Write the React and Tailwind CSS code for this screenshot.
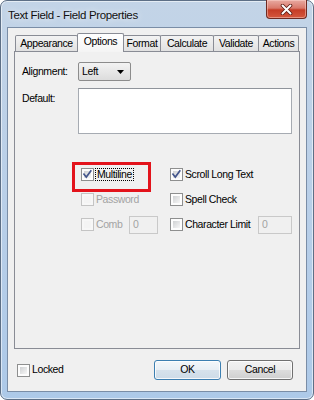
import React from "react";

function Check({ checked = false, disabled = false }) {
  return (
    <span
      className={`relative flex h-[13px] w-[13px] shrink-0 items-center justify-center border ${
        disabled ? "border-[#c4c4c4] bg-[#f7f7f7]" : "border-[#8e8f8f] bg-[#fdfdfd]"
      }`}
    >
      <span
        className={`absolute inset-[2px] ${
          disabled
            ? "bg-[#f4f4f4]"
            : "bg-gradient-to-br from-[#cfd1d3] to-[#f7f7f7]"
        }`}
      />
      {checked && (
        <svg className="relative" width="11" height="11" viewBox="0 0 11 11">
          <path d="M2 5.2 L4.3 8 L8.8 2" fill="none" stroke="#44568c" strokeWidth="1.7" strokeLinecap="square" />
        </svg>
      )}
    </span>
  );
}

function Tab({ label, w, selected }) {
  return (
    <div
      className={`-ml-px flex shrink-0 items-center justify-center rounded-t-[2px] border border-b-0 border-[#898c95] first:ml-0 ${
        selected
          ? "relative z-10 mb-[-1px] h-[19px] bg-gradient-to-b from-[#ffffff] to-[#f4f4f4] pb-[2px]"
          : "h-[16px] bg-gradient-to-b from-[#f3f3f3] to-[#e1e1e1]"
      }`}
      style={{ width: w }}
    >
      {label}
    </div>
  );
}

export default function App() {
  return (
    <div className="h-[400px] w-[314px] bg-white font-['Liberation_Sans',Arial,sans-serif] text-[10.5px] tracking-[-0.4px] text-black">
      <div className="flex h-[400px] w-[314px] flex-col rounded-[7px] border border-[#5d6f86] bg-gradient-to-b from-[#c3d4e7] via-[#b9cfe8] to-[#adc9e8] px-[6px] pb-[7px] shadow-[inset_0_0_0_1px_rgba(255,255,255,0.55)]">
        {/* Title bar */}
        <div className="flex h-[26px] shrink-0 items-start justify-between">
          <div className="pl-[1px] pt-[6px] text-[11.5px] tracking-[-0.35px] text-[#111] [text-shadow:0_0_7px_rgba(255,255,255,0.95)]">
            Text Field - Field Properties
          </div>
          <div className="-mt-px flex h-[19px] w-[41px] items-center justify-center rounded-b-[4px] border border-t-0 border-[#6e2a22] bg-[linear-gradient(#e8aaa1_0%,#d9796b_45%,#c53c26_55%,#d5583e_100%)] shadow-[inset_0_0_0_1px_rgba(255,220,210,0.45)]">
            <svg width="13" height="11" viewBox="0 0 13 11">
              <path d="M2.5 1.5 L10.5 9.5 M10.5 1.5 L2.5 9.5" stroke="#5a1a12" strokeWidth="3.6" strokeLinecap="round" />
              <path d="M2.5 1.5 L10.5 9.5 M10.5 1.5 L2.5 9.5" stroke="#ffffff" strokeWidth="2" strokeLinecap="round" />
            </svg>
          </div>
        </div>

        {/* Client */}
        <div className="flex flex-1 flex-col border border-[#7a8da6] bg-[#f0f0f0] pt-[5px]">
          <div className="mx-[6px] flex flex-col">
            {/* Tabs */}
            <div className="relative z-10 flex h-[18px] items-end pl-[1px]">
              <Tab label="Appearance" w={63} />
              <Tab label="Options" w={47} selected />
              <Tab label="Format" w={38} />
              <Tab label="Calculate" w={54} />
              <Tab label="Validate" w={46} />
              <Tab label="Actions" w={41} />
            </div>

            {/* Panel */}
            <div className="flex h-[298px] flex-col border border-[#898c95] bg-[#f0f0f0] pl-[7px]">
              <div className="mt-[10px] flex h-[19px] items-center">
                <div className="w-[56px]">Alignment:</div>
                <div className="flex h-[19px] w-[53px] items-center justify-between rounded-[2px] border border-[#8c8c8c] bg-gradient-to-b from-[#f3f3f3] to-[#dcdcdc] pl-[3px] pr-[6px]">
                  <span>Left</span>
                  <svg width="7" height="4" viewBox="0 0 7 4">
                    <path d="M0 0 H7 L3.5 4 Z" fill="#000" />
                  </svg>
                </div>
              </div>

              <div className="mt-[7px] flex items-start">
                <div className="w-[56px] pt-[3px]">Default:</div>
                <div className="h-[46px] w-[214px] border border-[#a6abb2] border-t-[#8f949b] bg-white" />
              </div>

              <div className="ml-[59px] mt-[34px] grid grid-cols-[89px_1fr] gap-y-[12px]">
                {/* Row 1 */}
                <div className="relative flex h-[13px] items-center gap-[1px]">
                  <Check checked />
                  <span className="flex h-[13px] items-center border border-dotted border-black px-px leading-[11px]">
                    Multiline
                  </span>
                  <div className="absolute left-[-9px] top-[-6px] h-[30px] w-[79px] border-[3px] border-[#e3131b]" />
                </div>
                <div className="flex h-[13px] items-center gap-[2px]">
                  <Check checked />
                  <span>Scroll Long Text</span>
                </div>

                {/* Row 2 */}
                <div className="flex h-[13px] items-center gap-[2px] text-[#a3a3a3]">
                  <Check disabled />
                  <span>Password</span>
                </div>
                <div className="flex h-[13px] items-center gap-[2px]">
                  <Check />
                  <span>Spell Check</span>
                </div>

                {/* Row 3 */}
                <div className="flex h-[13px] items-center gap-[2px] text-[#a3a3a3]">
                  <Check disabled />
                  <span className="w-[31px]">Comb</span>
                  <div className="flex h-[18px] w-[29px] shrink-0 items-center border border-[#c9c9c9] bg-[#f0f0f0] pl-[3px]">
                    0
                  </div>
                </div>
                <div className="flex h-[13px] items-center gap-[2px]">
                  <Check />
                  <span className="w-[71px]">Character Limit</span>
                  <div className="flex h-[18px] w-[34px] shrink-0 items-center border border-[#c9c9c9] bg-[#f0f0f0] pl-[3px] text-[#a3a3a3]">
                    0
                  </div>
                </div>
              </div>
            </div>
          </div>

          {/* Bottom row */}
          <div className="mt-[11px] flex h-[20px] items-center pl-[9px] pr-[13px]">
            <div className="flex items-center gap-[2px]">
              <Check />
              <span>Locked</span>
            </div>
            <div className="ml-auto flex gap-[6px]">
              <div className="flex h-[20px] w-[67px] items-center justify-center rounded-[3px] border border-[#3c7fb1] bg-[linear-gradient(#f3f7fa_0%,#e8eff5_50%,#d6e2ec_51%,#cddbe7_100%)] shadow-[inset_0_0_0_1px_rgba(255,255,255,0.8)]">
                OK
              </div>
              <div className="flex h-[20px] w-[66px] items-center justify-center rounded-[3px] border border-[#707070] bg-[linear-gradient(#f2f2f2_0%,#ebebeb_50%,#dddddd_51%,#cfcfcf_100%)] shadow-[inset_0_0_0_1px_rgba(255,255,255,0.8)]">
                Cancel
              </div>
            </div>
          </div>
        </div>
      </div>
    </div>
  );
}
